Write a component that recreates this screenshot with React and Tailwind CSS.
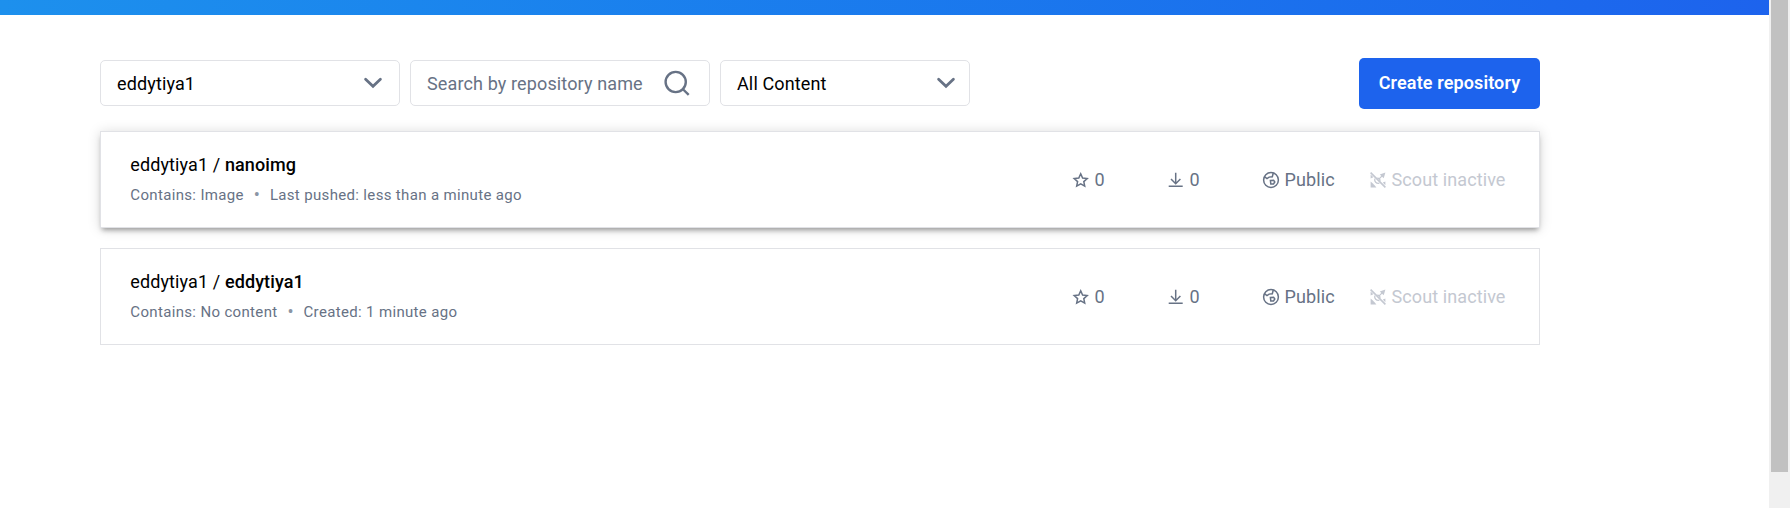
import React from "react";

function ChevronDown() {
  return (
    <svg className="h-5 w-5 shrink-0" viewBox="0 0 20 20" fill="none" stroke="#677285" strokeWidth="2.8" strokeLinecap="round">
      <path d="M2.6 6.2 10 13.2 17.4 6.2" />
    </svg>
  );
}

function SearchIcon() {
  return (
    <svg className="h-[26px] w-[26px] shrink-0" viewBox="0 0 26 26" fill="none" stroke="#677285" strokeWidth="2.4">
      <circle cx="11.7" cy="12" r="10.1" />
      <path d="M18.7 19 24.7 24.8" />
    </svg>
  );
}

function StarIcon() {
  return (
    <svg className="h-5 w-5 shrink-0" viewBox="0 0 20 20" fill="none" stroke="currentColor" strokeWidth="1.5" strokeLinejoin="miter">
      <path d="M9.7 3.8 11.6 8 16.2 8.5 12.8 11.6 13.7 16.1 9.7 13.8 5.7 16.1 6.6 11.6 3.2 8.5 7.8 8Z" />
    </svg>
  );
}

function DownloadIcon() {
  return (
    <svg className="h-5 w-5 shrink-0" viewBox="0 0 20 20" fill="none" stroke="currentColor" strokeWidth="1.5">
      <path d="M9.7 2.8V13.4M5 9 9.7 13.7 14.4 9M2.7 16.3H16.7" />
    </svg>
  );
}

function GlobeIcon() {
  return (
    <svg className="h-5 w-5 shrink-0" viewBox="0 0 20 20" fill="none" stroke="currentColor" strokeWidth="1.5">
      <circle cx="10" cy="10" r="7.4" />
      <path d="M3.4 6.6 6 8.6 8.1 7.1 11.3 6.7 12.3 3" />
      <path d="M9.4 10.4 12.6 10.2 13.8 12 12.5 13.9 9.8 14Z" />
    </svg>
  );
}

function ScoutIcon() {
  return (
    <svg className="h-5 w-5 shrink-0" viewBox="0 0 20 20" fill="currentColor">
      <path d="M11.8 4.4 17.4 2.6 15.7 8.2Z" />
      <path d="M2.6 11.6 4.6 13.2 6.8 15.4 8.4 17.4H2.6Z" />
      <path d="M2.6 4.6V8.4L5.4 7.2Z" />
      <path d="M14.8 12.6 17.4 11.6V15.2Z" />
      <path d="M2.6 2.6 17.4 17.4" stroke="currentColor" strokeWidth="1.6" fill="none" />
      <path d="M6.8 8.6C6.2 11.6 8.2 13.8 11.4 13.2M9.2 8.2C11.4 8.2 12.4 9.6 11.8 11.4M14.6 5.4 11.6 8.4" stroke="currentColor" strokeWidth="1.3" fill="none" />
    </svg>
  );
}

function Select({ value, width, pad }) {
  return (
    <button className={`flex h-[46px] items-center justify-between rounded-[5px] border border-[#e1e2e6] bg-white pl-4 text-[18px] tracking-[0.13px] text-black ${width} ${pad}`}>
      <span className="pt-px">{value}</span>
      <ChevronDown />
    </button>
  );
}

function Stat({ icon, label, width = "" }) {
  return (
    <div className={`flex items-center gap-[3.5px] whitespace-nowrap ${width}`}>
      {icon}
      <span className="leading-[26px]">{label}</span>
    </div>
  );
}

function RepoCard({ owner, name, contains, activity, raised }) {
  return (
    <article
      className={`flex h-[97px] items-center border border-[#e1e2e6] bg-white pl-[29px] text-[18px] tracking-[0.1px] text-[#677285] ${
        raised ? "shadow-[0px_4px_5px_-2px_rgba(0,0,0,0.35),0px_1px_12px_rgba(0,0,0,0.15)]" : ""
      }`}
    >
      <div className="w-[941px] shrink-0 pl-[0.3px]">
        <h2 className="text-[18px] leading-[26px] tracking-[0.11px] text-black">
          {owner} / <span className="font-medium">{name}</span>
        </h2>
        <p className="mt-[5px] flex text-[15px] leading-6 tracking-[0.34px]">
          <span>{contains}</span>
          <span className="w-[26px] text-center text-[18px] tracking-normal text-[#8b95a5]">•</span>
          <span>{activity}</span>
        </p>
      </div>
      <Stat width="w-[95px]" icon={<StarIcon />} label="0" />
      <Stat width="w-[95px]" icon={<DownloadIcon />} label="0" />
      <Stat width="w-[107px]" icon={<GlobeIcon />} label="Public" />
      <div className="text-[#c4c8d1]">
        <Stat icon={<ScoutIcon />} label="Scout inactive" />
      </div>
    </article>
  );
}

export default function App() {
  return (
    <div className="flex h-[508px] overflow-hidden bg-white font-['Roboto',sans-serif]">
      <div className="flex w-[1769px] flex-col">
        <header className="h-[15px] shrink-0 bg-linear-to-r from-[#1d90ed] to-[#1d63ed]" />
        <main className="ml-[100px] w-[1440px] pt-[43px]">
          <div className="flex h-[51px] items-start gap-[10px]">
            <div className="flex gap-[10px] pt-[2px]">
              <Select value="eddytiya1" width="w-[300px]" pad="pr-4" />
              <label className="flex h-[46px] w-[300px] items-center rounded-[5px] border border-[#e1e2e6] pr-[19px] pl-4">
                <input
                  className="min-w-0 flex-1 pt-px text-[18px] tracking-[0.13px] outline-none placeholder:text-[#677285]"
                  placeholder="Search by repository name"
                />
                <SearchIcon />
              </label>
              <Select value="All Content" width="w-[250px]" pad="pr-[13px]" />
            </div>
            <button className="ml-auto h-[51px] w-[181px] rounded-[5px] bg-[#1d63ed] pb-[2px] text-[18px] font-semibold tracking-[0.12px] text-white">
              Create repository
            </button>
          </div>
          <div className="mt-[22px] flex flex-col gap-5">
            <RepoCard owner="eddytiya1" name="nanoimg" contains="Contains: Image" activity="Last pushed: less than a minute ago" raised />
            <RepoCard owner="eddytiya1" name="eddytiya1" contains="Contains: No content" activity="Created: 1 minute ago" />
          </div>
        </main>
      </div>
      <div className="flex w-[21px] justify-center bg-[#f0f0f0] pr-px">
        <div className="h-[472px] w-[17px] bg-[#c1c1c1]" />
      </div>
    </div>
  );
}
